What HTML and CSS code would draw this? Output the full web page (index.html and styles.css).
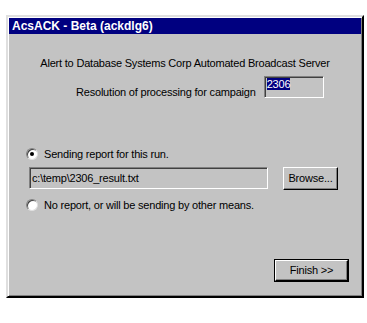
FILE: index.html
```html
<!DOCTYPE html>
<html>
<head>
<meta charset="utf-8">
<link rel="stylesheet" href="styles.css">
</head>
<body>
<div class="dialog">
  <div class="titlebar">AcsACK - Beta (ackdlg6)</div>
  <div class="content">
    <p class="alert">Alert to Database Systems Corp Automated Broadcast Server</p>
    <div class="resolution">
      <span class="label">Resolution of processing for campaign</span>
      <div class="field campaign"><span class="sel">2306</span></div>
    </div>
    <div class="radio-row first"><span class="radio checked"></span><span>Sending report for this run.</span></div>
    <div class="path-row">
      <div class="field path">c:\temp\2306_result.txt</div>
      <div class="btn browse">Browse...</div>
    </div>
    <div class="radio-row second"><span class="radio"></span><span>No report, or will be sending by other means.</span></div>
    <div class="footer">
      <div class="default"><div class="btn finish">Finish &gt;&gt;</div></div>
    </div>
  </div>
</div>
</body>
</html>
```
FILE: styles.css
```css
html, body {
  margin: 0;
  padding: 0;
  background: #ffffff;
}
body {
  font-family: "Liberation Sans", Arial, sans-serif;
  font-size: 11px;
  letter-spacing: -0.2px;
  color: #000;
}
.dialog {
  margin: 15px 0 0 6px;
  width: 352px;
  height: 277px;
  background: #c3c3c3;
  border-style: solid;
  border-width: 2px;
  border-color: #dfdfdf #000000 #000000 #dfdfdf;
  box-shadow: inset 1px 1px 0 #ffffff, inset -1px -1px 0 #808080;
  padding: 1px;
  display: flex;
  flex-direction: column;
}
.titlebar {
  height: 16px;
  background: #000080;
  color: #ffffff;
  font-weight: bold;
  font-size: 12px;
  letter-spacing: 0;
  line-height: 16px;
  padding-left: 3px;
}
.content {
  flex: 1;
  display: flex;
  flex-direction: column;
}
.alert {
  margin: 22px 0 0 0;
  text-align: center;
  line-height: 14px;
}
.resolution {
  display: flex;
  align-items: flex-end;
  margin: 6px 0 0 67px;
  gap: 8px;
}
.resolution .label {
  line-height: 14px;
  margin-bottom: -1px;
}
.field {
  box-sizing: border-box;
  border-style: solid;
  border-width: 1px;
  border-color: #808080 #ffffff #ffffff #808080;
  box-shadow: inset 1px 1px 0 #404040;
  background: #c3c3c3;
}
.campaign {
  width: 60px;
  height: 22px;
  padding: 1px 0 0 2px;
  line-height: 12px;
}
.sel {
  background: #000080;
  color: #ffffff;
  display: inline-block;
  line-height: 12px;
}
.radio-row {
  display: flex;
  align-items: center;
  gap: 6px;
  line-height: 14px;
  margin-left: 17px;
}
.radio-row.first {
  margin-top: 49px;
}
.radio-row.second {
  margin-top: 8px;
}
.radio {
  width: 12px;
  height: 12px;
  border-radius: 50%;
  box-sizing: border-box;
  background: #ffffff;
  border: 1px solid;
  border-color: #808080 #e0e0e0 #e0e0e0 #808080;
  box-shadow: inset 1px 1px 0 #404040;
  position: relative;
}
.radio.checked::after {
  content: "";
  position: absolute;
  left: 3px;
  top: 3px;
  width: 4px;
  height: 4px;
  border-radius: 50%;
  background: #000;
}
.path-row {
  display: flex;
  align-items: flex-start;
  margin: 6px 0 0 20px;
  gap: 15px;
}
.path {
  width: 239px;
  height: 22px;
  line-height: 20px;
  padding-left: 2px;
}
.btn {
  box-sizing: border-box;
  background: #c3c3c3;
  border-style: solid;
  border-width: 1px;
  border-color: #ffffff #000000 #000000 #ffffff;
  box-shadow: inset -1px -1px 0 #808080;
  text-align: center;
}
.browse {
  width: 55px;
  height: 23px;
  line-height: 21px;
}
.footer {
  margin-top: auto;
  display: flex;
  justify-content: flex-end;
  padding: 0 12px 13px 0;
}
.default {
  border: 1px solid #000;
}
.finish {
  width: 73px;
  height: 21px;
  line-height: 19px;
}
```
